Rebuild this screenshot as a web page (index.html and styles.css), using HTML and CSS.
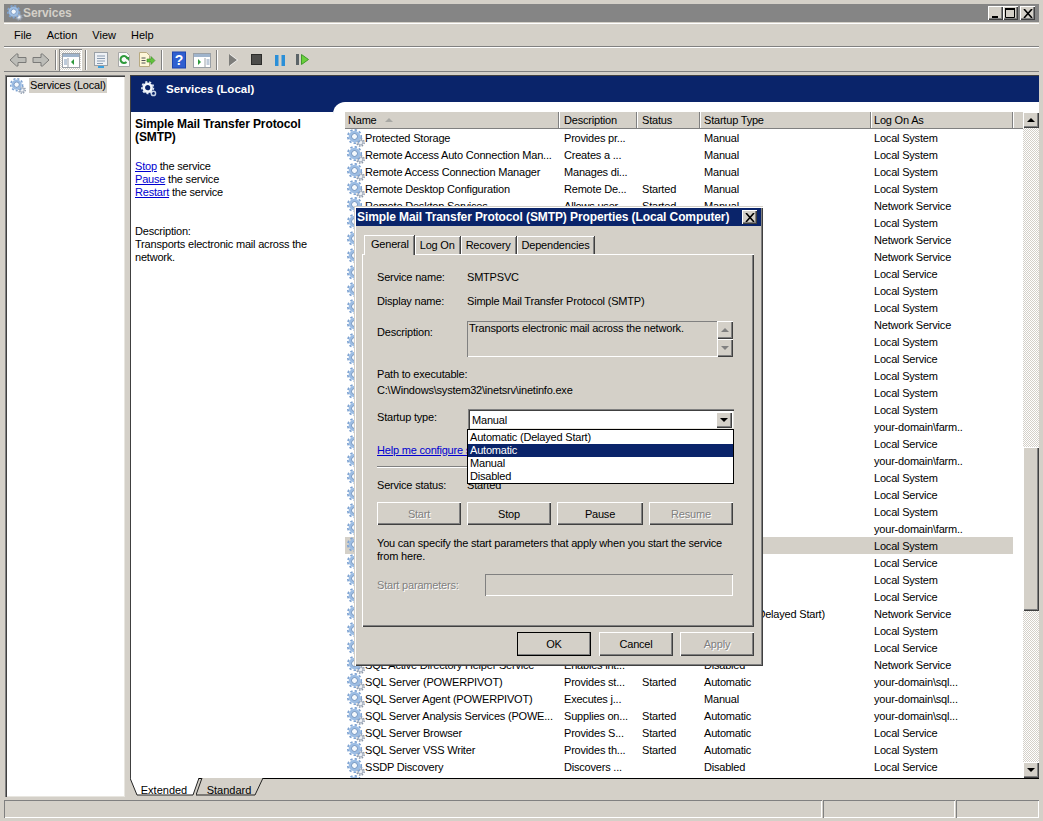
FILE: index.html
```html
<!DOCTYPE html>
<html lang="en">
<head>
    <meta charset="UTF-8">
    <title>Services</title>
    <link rel="stylesheet" href="styles.css">
</head>
<body>
    <svg class="defs" width="0" height="0">
        <symbol id="gear" viewBox="0 0 18 18">
            <circle cx="13.5" cy="13.5" r="3.6" fill="none" stroke="#8d99aa" stroke-width="1.6" stroke-dasharray="1.5 1.3"/>
            <circle cx="13.5" cy="13.5" r="2.4" fill="#eef1f5" stroke="#a9b3c2" stroke-width="1.2"/>
            <circle cx="7.5" cy="7.5" r="6.7" fill="none" stroke="#7ea3d2" stroke-width="1.7" stroke-dasharray="2.4 2.1"/>
            <circle cx="7.5" cy="7.5" r="4.5" fill="#f4f8fc" stroke="#9cbde4" stroke-width="2.6"/>
            <circle cx="7.5" cy="7.5" r="3" fill="none" stroke="#4f78ae" stroke-width=".8"/>
        </symbol>
        <symbol id="gear-light" viewBox="0 0 18 18">
            <circle cx="14" cy="14" r="2.4" fill="none" stroke="#c7d3e6" stroke-width="1.6"/>
            <circle cx="7.5" cy="7.5" r="6.5" fill="none" stroke="#dfe8f4" stroke-width="1.8" stroke-dasharray="2.4 2.1"/>
            <circle cx="7.5" cy="7.5" r="4.4" fill="none" stroke="#f2f6fb" stroke-width="3"/>
        </symbol>
    </svg>

    <div class="window">
        <div class="titlebar">
            <svg class="ico16"><use href="#gear"/></svg>
            <span class="title-text">Services</span>
            <div class="caption-btns">
                <button class="caption-btn"><svg width="9" height="9"><rect x="1" y="7" width="6" height="2" fill="#000"/></svg></button>
                <button class="caption-btn"><svg width="11" height="10"><path d="M.5 1.5h9v8h-9z" fill="none" stroke="#000"/><path d="M0 1h10" stroke="#000" stroke-width="2"/></svg></button>
                <button class="caption-btn close-gap"><svg width="10" height="9"><path d="M1 0l8 9M9 0L1 9" stroke="#000" stroke-width="1.6"/></svg></button>
            </div>
        </div>

        <div class="menubar">
            <span>File</span>
            <span>Action</span>
            <span>View</span>
            <span>Help</span>
        </div>

        <div class="toolbar">
            <span class="tool"><svg width="18" height="16"><path d="M1 8l6.500-6h1.500v3.500h8v5H9V14H7.500z" fill="#bdbdb8" stroke="#7a7a78"/></svg></span>
            <span class="tool"><svg width="18" height="16"><path d="M17 8l-6.500-6H9v3.500H1v5h8V14h1.500z" fill="#bdbdb8" stroke="#7a7a78"/></svg></span>
            <span class="tool-sep"></span>
            <span class="tool tool-on"><svg width="18" height="16"><rect x=".5" y="1.500" width="17" height="14" fill="#fff" stroke="#9aa0a6"/><rect x="1" y="2" width="16" height="3" fill="#9fb4cc"/><path d="M6 6v9" stroke="#9aa0a6"/><path d="M12 7v6l-3-3z" fill="#2f9a3c"/><path d="M2 8h3M2 10h3M2 12h3" stroke="#7f97b5"/></svg></span>
            <span class="tool-sep"></span>
            <span class="tool"><svg width="16" height="18"><rect x="1.500" y="1.500" width="13" height="13" fill="#eef1f5" stroke="#9aa0a6"/><path d="M4 5h8M4 7.500h8M4 10h8M4 12.500h6" stroke="#8a9bb0"/><path d="M5 16h6" stroke="#3aa0e0" stroke-width="2"/></svg></span>
            <span class="tool"><svg width="16" height="18"><path d="M2.500 1.500h8l3 3v11h-11z" fill="#fafafa" stroke="#a8a8a8"/><path d="M11.500 8a3.500 3.500 0 1 0-1 3" fill="none" stroke="#2f9a3c" stroke-width="2"/><path d="M9 6h4v4z" fill="#2f9a3c"/></svg></span>
            <span class="tool"><svg width="18" height="18"><path d="M1.500 1.500h7l3 3v11h-10z" fill="#fdf6d8" stroke="#b8aa80"/><path d="M3.500 7h4M3.500 9.500h4M3.500 12h4" stroke="#555"/><path d="M9 8h4V5.500l4 4-4 4V11H9z" fill="#62c23c" stroke="#3a8a26" stroke-width=".6"/></svg></span>
            <span class="tool-sep wide"></span>
            <span class="tool"><svg width="14" height="18"><rect width="14" height="17" y=".5" fill="#1d45b0"/><rect x="1" y="1.500" width="12" height="15" fill="#2f5fd0"/><text x="7" y="14" class="help-q">?</text></svg></span>
            <span class="tool"><svg width="18" height="16"><rect x=".5" y="1.500" width="17" height="14" fill="#fff" stroke="#9aa0a6"/><rect x="1" y="2" width="16" height="3" fill="#9fb4cc"/><path d="M12 6v9" stroke="#9aa0a6"/><path d="M5 7v6l3-3z" fill="#2f9a3c"/><path d="M13.500 8h3M13.500 10h3M13.500 12h3" stroke="#7f97b5"/></svg></span>
            <span class="tool-sep wide"></span>
            <span class="tool"><svg width="11" height="14"><path d="M2 1l8 6-8 6z" fill="#fff"/><path d="M1 1l8 6-8 6z" fill="#7d7d7a"/></svg></span>
            <span class="tool"><svg width="11" height="11"><rect x=".5" y=".5" width="10" height="10" fill="#4c4c4a" stroke="#2c2c2a"/></svg></span>
            <span class="tool"><svg width="10" height="12"><path d="M0 1h3.500v11H0zM6.500 1H10v11H6.500z" fill="#2a8fd8"/></svg></span>
            <span class="tool"><svg width="13" height="13"><rect y="1" width="3" height="11" fill="#5c6468"/><path d="M5.500 1.500l7 5-7 5z" fill="#6ad03c" stroke="#3f9a2a"/></svg></span>
        </div>

        <div class="workspace">
            <div class="tree">
                <div class="tree-item">
                    <svg class="ico16"><use href="#gear"/></svg>
                    <span class="tree-label">Services (Local)</span>
                </div>
            </div>

            <div class="pane">
                <div class="pane-frame">
                    <div class="pane-head">
                        <svg class="ico16"><use href="#gear-light"/></svg>
                        <span>Services (Local)</span>
                    </div>
                    <div class="pane-body">
                        <div class="details">
                            <h2>Simple Mail Transfer Protocol (SMTP)</h2>
                            <p><a href="#">Stop</a> the service<br><a href="#">Pause</a> the service<br><a href="#">Restart</a> the service</p>
                            <p class="desc">Description:<br>Transports electronic mail across the network.</p>
                        </div>
                        <div class="list-back">
                            <div class="list">
                                <div class="list-main">
                                    <div class="row head">
                                        <span class="c1 sorted">Name</span>
                                        <span class="c2">Description</span>
                                        <span class="c3">Status</span>
                                        <span class="c4">Startup Type</span>
                                        <span class="c5">Log On As</span>
                                    </div>
                                    <div class="rows">
                                        <div class="row"><svg class="ico"><use href="#gear"/></svg><span class="c1">Protected Storage</span><span class="c2">Provides pr...</span><span class="c3"></span><span class="c4">Manual</span><span class="c5">Local System</span></div>
                                        <div class="row"><svg class="ico"><use href="#gear"/></svg><span class="c1">Remote Access Auto Connection Man...</span><span class="c2">Creates a ...</span><span class="c3"></span><span class="c4">Manual</span><span class="c5">Local System</span></div>
                                        <div class="row"><svg class="ico"><use href="#gear"/></svg><span class="c1">Remote Access Connection Manager</span><span class="c2">Manages di...</span><span class="c3"></span><span class="c4">Manual</span><span class="c5">Local System</span></div>
                                        <div class="row"><svg class="ico"><use href="#gear"/></svg><span class="c1">Remote Desktop Configuration</span><span class="c2">Remote De...</span><span class="c3">Started</span><span class="c4">Manual</span><span class="c5">Local System</span></div>
                                        <div class="row"><svg class="ico"><use href="#gear"/></svg><span class="c1">Remote Desktop Services</span><span class="c2">Allows user...</span><span class="c3">Started</span><span class="c4">Manual</span><span class="c5">Network Service</span></div>
                                        <div class="row"><svg class="ico"><use href="#gear"/></svg><span class="c5 push">Local System</span></div>
                                        <div class="row"><svg class="ico"><use href="#gear"/></svg><span class="c5 push">Network Service</span></div>
                                        <div class="row"><svg class="ico"><use href="#gear"/></svg><span class="c5 push">Network Service</span></div>
                                        <div class="row"><svg class="ico"><use href="#gear"/></svg><span class="c5 push">Local Service</span></div>
                                        <div class="row"><svg class="ico"><use href="#gear"/></svg><span class="c5 push">Local System</span></div>
                                        <div class="row"><svg class="ico"><use href="#gear"/></svg><span class="c5 push">Local System</span></div>
                                        <div class="row"><svg class="ico"><use href="#gear"/></svg><span class="c5 push">Network Service</span></div>
                                        <div class="row"><svg class="ico"><use href="#gear"/></svg><span class="c5 push">Local System</span></div>
                                        <div class="row"><svg class="ico"><use href="#gear"/></svg><span class="c5 push">Local Service</span></div>
                                        <div class="row"><svg class="ico"><use href="#gear"/></svg><span class="c5 push">Local System</span></div>
                                        <div class="row"><svg class="ico"><use href="#gear"/></svg><span class="c5 push">Local System</span></div>
                                        <div class="row"><svg class="ico"><use href="#gear"/></svg><span class="c5 push">Local System</span></div>
                                        <div class="row"><svg class="ico"><use href="#gear"/></svg><span class="c5 push">your-domain\farm..</span></div>
                                        <div class="row"><svg class="ico"><use href="#gear"/></svg><span class="c5 push">Local Service</span></div>
                                        <div class="row"><svg class="ico"><use href="#gear"/></svg><span class="c5 push">your-domain\farm..</span></div>
                                        <div class="row"><svg class="ico"><use href="#gear"/></svg><span class="c5 push">Local System</span></div>
                                        <div class="row"><svg class="ico"><use href="#gear"/></svg><span class="c5 push">Local Service</span></div>
                                        <div class="row"><svg class="ico"><use href="#gear"/></svg><span class="c5 push">Local System</span></div>
                                        <div class="row"><svg class="ico"><use href="#gear"/></svg><span class="c5 push">your-domain\farm..</span></div>
                                        <div class="row selected"><svg class="ico"><use href="#gear"/></svg><span class="c5 push">Local System</span></div>
                                        <div class="row"><svg class="ico"><use href="#gear"/></svg><span class="c5 push">Local Service</span></div>
                                        <div class="row"><svg class="ico"><use href="#gear"/></svg><span class="c5 push">Local System</span></div>
                                        <div class="row"><svg class="ico"><use href="#gear"/></svg><span class="c5 push">Local Service</span></div>
                                        <div class="row"><svg class="ico"><use href="#gear"/></svg><span class="c4 push4">Automatic (Delayed Start)</span><span class="c5">Network Service</span></div>
                                        <div class="row"><svg class="ico"><use href="#gear"/></svg><span class="c5 push">Local System</span></div>
                                        <div class="row"><svg class="ico"><use href="#gear"/></svg><span class="c5 push">Local Service</span></div>
                                        <div class="row"><svg class="ico"><use href="#gear"/></svg><span class="c1">SQL Active Directory Helper Service</span><span class="c2">Enables int...</span><span class="c3"></span><span class="c4">Disabled</span><span class="c5">Network Service</span></div>
                                        <div class="row"><svg class="ico"><use href="#gear"/></svg><span class="c1">SQL Server (POWERPIVOT)</span><span class="c2">Provides st...</span><span class="c3">Started</span><span class="c4">Automatic</span><span class="c5">your-domain\sql...</span></div>
                                        <div class="row"><svg class="ico"><use href="#gear"/></svg><span class="c1">SQL Server Agent (POWERPIVOT)</span><span class="c2">Executes j...</span><span class="c3"></span><span class="c4">Manual</span><span class="c5">your-domain\sql...</span></div>
                                        <div class="row"><svg class="ico"><use href="#gear"/></svg><span class="c1">SQL Server Analysis Services (POWE...</span><span class="c2">Supplies on...</span><span class="c3">Started</span><span class="c4">Automatic</span><span class="c5">your-domain\sql...</span></div>
                                        <div class="row"><svg class="ico"><use href="#gear"/></svg><span class="c1">SQL Server Browser</span><span class="c2">Provides S...</span><span class="c3">Started</span><span class="c4">Automatic</span><span class="c5">Local Service</span></div>
                                        <div class="row"><svg class="ico"><use href="#gear"/></svg><span class="c1">SQL Server VSS Writer</span><span class="c2">Provides th...</span><span class="c3">Started</span><span class="c4">Automatic</span><span class="c5">Local System</span></div>
                                        <div class="row"><svg class="ico"><use href="#gear"/></svg><span class="c1">SSDP Discovery</span><span class="c2">Discovers ...</span><span class="c3"></span><span class="c4">Disabled</span><span class="c5">Local Service</span></div>
                                        <div class="row"><svg class="ico"><use href="#gear"/></svg></div>
                                    </div>
                                </div>
                                <div class="scrollbar">
                                    <button class="sb-btn"><i class="arrow up"></i></button>
                                    <div class="sb-track">
                                        <div class="sb-thumb"></div>
                                    </div>
                                    <button class="sb-btn"><i class="arrow down"></i></button>
                                </div>
                            </div>
                        </div>
                    </div>
                </div>
                <div class="view-tabs">
                    <div class="view-tab active">
                        <svg width="69" height="18"><path d="M0 0l7 17h56l6-17z" fill="#fff"/><path d="M0 0l7 17h56l6-17" fill="none" stroke="#222"/></svg>
                        <span>Extended</span>
                    </div>
                    <div class="view-tab">
                        <svg width="68" height="18"><path d="M6 0L0 17h59l8-17" fill="#d4d0c8"/><path d="M6 0L0 17h59l8-17" fill="none" stroke="#222"/></svg>
                        <span>Standard</span>
                    </div>
                </div>
            </div>
        </div>

        <div class="statusbar">
            <div class="status-cell grow"></div>
            <div class="status-cell mid"></div>
            <div class="status-cell end"></div>
        </div>
    </div>

    <div class="dialog">
        <div class="dialog-title">
            <span>Simple Mail Transfer Protocol (SMTP) Properties (Local Computer)</span>
            <button class="caption-btn"><svg width="10" height="9"><path d="M1 0l8 9M9 0L1 9" stroke="#000" stroke-width="1.6"/></svg></button>
        </div>
        <div class="tabs">
            <div class="tab current">General</div>
            <div class="tab">Log On</div>
            <div class="tab">Recovery</div>
            <div class="tab">Dependencies</div>
        </div>
        <div class="tab-panel">
            <div class="field f-name"><label>Service name:</label><span>SMTPSVC</span></div>
            <div class="field f-display"><label>Display name:</label><span>Simple Mail Transfer Protocol (SMTP)</span></div>
            <div class="field f-desc">
                <label>Description:</label>
                <div class="desc-box">
                    <span>Transports electronic mail across the network.</span>
                    <div class="desc-scroll">
                        <button class="sb-btn off"><i class="arrow up"></i></button>
                        <button class="sb-btn off"><i class="arrow down"></i></button>
                    </div>
                </div>
            </div>
            <div class="path">Path to executable:<br>C:\Windows\system32\inetsrv\inetinfo.exe</div>
            <div class="field f-startup">
                <label>Startup type:</label>
                <div class="combo">
                    <div class="combo-value">Manual<button class="sb-btn"><i class="arrow down"></i></button></div>
                    <ul class="combo-list">
                        <li>Automatic (Delayed Start)</li>
                        <li class="hot">Automatic</li>
                        <li>Manual</li>
                        <li>Disabled</li>
                    </ul>
                </div>
            </div>
            <a class="help-link" href="#">Help me configure service startup options.</a>
            <div class="rule"></div>
            <div class="field f-status"><label>Service status:</label><span>Started</span></div>
            <div class="svc-btns">
                <button class="btn off">Start</button>
                <button class="btn">Stop</button>
                <button class="btn">Pause</button>
                <button class="btn off">Resume</button>
            </div>
            <p class="hint">You can specify the start parameters that apply when you start the service from here.</p>
            <div class="field f-params"><label class="muted">Start parameters:</label><div class="param-input"></div></div>
        </div>
        <div class="dialog-btns">
            <button class="btn default">OK</button>
            <button class="btn">Cancel</button>
            <button class="btn off">Apply</button>
        </div>
    </div>
</body>
</html>
```
FILE: styles.css
```css
html, body {
    margin: 0;
    height: 100%;
    overflow: hidden;
}

body {
    background: #d4d0c8;
    color: #000;
    font-family: "Liberation Sans", Arial, sans-serif;
    font-size: 11px;
    letter-spacing: -0.2px;
    position: relative;
}

.defs {
    position: absolute;
}

button {
    font: inherit;
    letter-spacing: inherit;
    color: inherit;
    padding: 0;
    border: 0;
}

a {
    color: #0000d0;
}

.ico16 {
    width: 16px;
    height: 16px;
    flex: none;
}

.window {
    padding: 4px 4px 3px;
    height: 821px;
    box-sizing: border-box;
    display: flex;
    flex-direction: column;
}

/* title bar */
.titlebar {
    height: 18px;
    background: #858585;
    color: #d4d0c8;
    font-weight: bold;
    font-size: 12px;
    letter-spacing: -0.1px;
    display: flex;
    align-items: center;
    padding: 0 3px;
}

.caption-btns {
    margin-left: auto;
    display: flex;
    padding-right: 1px;
}

.caption-btn {
    width: 15px;
    height: 14px;
    background: #d4d0c8;
    box-shadow: inset 1px 1px #fff, inset -1px -1px #404040, inset -2px -2px #808080;
    display: flex;
    align-items: center;
    justify-content: center;
}

.close-gap {
    margin-left: 2px;
}

/* menu and toolbar */
.menubar {
    height: 22px;
    margin-top: 1px;
    border-top: 1px solid #fff;
    border-bottom: 1px solid #808080;
    display: flex;
    align-items: center;
    padding-left: 10px;
    gap: 15px;
    letter-spacing: 0;
}

.toolbar {
    height: 23px;
    border-top: 1px solid #fff;
    border-bottom: 1px solid #808080;
    display: flex;
    align-items: center;
    padding-left: 2px;
}

.tool {
    width: 23px;
    height: 22px;
    display: flex;
    align-items: center;
    justify-content: center;
    flex: none;
}

.tool-on {
    background: repeating-conic-gradient(#d4d0c8 0 25%, #fff 0 50%) 0 0 / 2px 2px;
    box-shadow: inset 1px 1px #808080, inset -1px -1px #fff;
}

.tool-sep {
    width: 7px;
    height: 20px;
    flex: none;
    background: linear-gradient(#808080, #808080) 3px 0 / 1px 100% no-repeat,
                linear-gradient(#fff, #fff) 4px 0 / 1px 100% no-repeat;
}

.tool-sep.wide {
    width: 9px;
}

.help-q {
    fill: #fff;
    font-size: 14px;
    font-weight: bold;
    text-anchor: middle;
}

/* main area */
.workspace {
    flex: 1;
    display: flex;
    min-height: 0;
    padding-top: 3px;
    gap: 5px;
}

.tree {
    width: 120px;
    flex: none;
    background: #fff;
    box-shadow: inset 1px 1px #808080, inset 2px 2px #404040, inset -1px -1px #e8e6e0;
    padding: 3px 0 0 5px;
    box-sizing: border-box;
    margin-left: 1px;
}

.tree-item {
    display: flex;
    align-items: center;
    gap: 3px;
    height: 15px;
}

.tree-label {
    background: #d4d0c8;
    padding: 0 1px;
    height: 15px;
    line-height: 15px;
}

.pane {
    flex: 1;
    min-width: 0;
    display: flex;
    flex-direction: column;
}

.pane-frame {
    flex: 1;
    min-height: 0;
    background: #fff;
    border-left: 1px solid #404040;
    border-top: 1px solid #404040;
    display: flex;
    flex-direction: column;
}

.pane-head {
    height: 26px;
    background: #0a246a;
    color: #fff;
    font-weight: bold;
    font-size: 11.5px;
    letter-spacing: 0;
    display: flex;
    align-items: center;
    padding-left: 10px;
    gap: 9px;
    flex: none;
}

.pane-body {
    flex: 1;
    min-height: 0;
    display: flex;
}

.details {
    width: 202px;
    flex: none;
    border-top: 10px solid #0a246a;
    padding: 6px 5px 0 4px;
    box-sizing: border-box;
    line-height: 13px;
}

.details h2 {
    font-size: 12px;
    letter-spacing: -0.1px;
    margin: 0 0 16px;
    line-height: 13px;
}

.details p {
    margin: 0 0 26px;
}

.list-back {
    flex: 1;
    min-width: 0;
    background: #0a246a;
}

.list {
    height: 100%;
    background: #fff;
    border-top-left-radius: 12px;
    padding: 10px 0 0 12px;
    box-sizing: border-box;
    display: flex;
}

.list-main {
    flex: 1;
    min-width: 0;
    overflow: hidden;
}

.row {
    display: flex;
    align-items: center;
    height: 17px;
    width: 668px;
    white-space: nowrap;
}

.row .ico {
    width: 18px;
    height: 18px;
    flex: none;
    margin-left: 2px;
}

.row span {
    flex: none;
    overflow: hidden;
    box-sizing: border-box;
    padding-left: 5px;
}

.row .c1 { width: 194px; padding-left: 0; }
.row .c2 { width: 78px; }
.row .c3 { width: 63px; }
.row .c4 { width: 171px; padding-left: 4px; }
.row .c5 { width: 142px; padding-left: 3px; }
.row .push { margin-left: 506px; }
.row .push4 { margin-left: 335px; }

.row.selected {
    background: #d4d0c8;
}

.row.head {
    width: 678px;
    height: 17px;
    background: #d4d0c8;
    border-bottom: 1px solid #808080;
    box-sizing: border-box;
}

.row.head span {
    height: 16px;
    line-height: 17px;
    border-right: 1px solid #808080;
    box-shadow: 1px 0 #fff;
}

.row.head .c1 {
    width: 214px;
    padding-left: 3px;
    position: relative;
}

.row.head .sorted::after {
    content: "";
    position: absolute;
    left: 40px;
    top: 6px;
    border: 4px solid transparent;
    border-top: 0;
    border-bottom: 4px solid #a8a8a4;
}

.rows {
    height: 650px;
    overflow: hidden;
}

/* scroll bars */
.scrollbar {
    width: 16px;
    flex: none;
    display: flex;
    flex-direction: column;
}

.sb-btn {
    width: 16px;
    height: 16px;
    flex: none;
    background: #d4d0c8;
    box-shadow: inset 1px 1px #fff, inset -1px -1px #404040, inset -2px -2px #808080;
    display: flex;
    align-items: center;
    justify-content: center;
}

.arrow {
    width: 0;
    height: 0;
    border: 4px solid transparent;
}

.arrow.up {
    border-top: 0;
    border-bottom-color: #000;
}

.arrow.down {
    border-bottom: 0;
    border-top-color: #000;
}

.off .arrow.up {
    border-bottom-color: #808080;
}

.off .arrow.down {
    border-top-color: #808080;
}

.sb-track {
    flex: 1;
    background: repeating-conic-gradient(#d4d0c8 0 25%, #fff 0 50%) 0 0 / 2px 2px;
    padding-top: 319px;
}

.sb-thumb {
    height: 164px;
    background: #d4d0c8;
    box-shadow: inset 1px 1px #fff, inset -1px -1px #404040, inset -2px -2px #808080;
}

/* Extended / Standard tabs */
.view-tabs {
    height: 18px;
    flex: none;
    border-top: 1px solid #000;
    display: flex;
    letter-spacing: 0;
}

.view-tab {
    position: relative;
    width: 66px;
    height: 18px;
    box-sizing: border-box;
    padding-top: 3px;
    display: flex;
    align-items: center;
    justify-content: center;
}

.view-tab.active {
    padding-left: 2px;
}

.view-tab svg {
    position: absolute;
    left: 0;
    top: -1px;
}

.view-tab span {
    position: relative;
}

.statusbar {
    height: 18px;
    flex: none;
    display: flex;
    margin-top: 3px;
    gap: 1px;
}

.status-cell {
    box-shadow: inset 1px 1px #808080, inset -1px -1px #fff;
}

.status-cell.grow { flex: 1; }
.status-cell.mid { width: 132px; }
.status-cell.end { width: 83px; }

/* properties dialog */
.dialog {
    position: absolute;
    left: 354px;
    top: 206px;
    width: 409px;
    height: 460px;
    box-sizing: border-box;
    background: #d4d0c8;
    box-shadow: inset 1px 1px #d4d0c8, inset 2px 2px #fff, inset -1px -1px #404040, inset -2px -2px #808080;
    padding: 2px 2px 3px;
    display: flex;
    flex-direction: column;
}

.dialog-title {
    height: 18px;
    flex: none;
    background: #0a246a;
    color: #fff;
    font-weight: bold;
    font-size: 12px;
    letter-spacing: -0.1px;
    display: flex;
    align-items: center;
    justify-content: space-between;
    padding: 0 4px 0 1px;
    white-space: nowrap;
}

.tabs {
    display: flex;
    align-items: flex-end;
    height: 28px;
    padding-left: 8px;
    flex: none;
}

.tab {
    height: 18px;
    line-height: 19px;
    padding: 0 5px;
    background: #d4d0c8;
    box-shadow: inset 1px 1px #fff, inset -1px 0 #808080;
    border-right: 1px solid #404040;
}

.tab.current {
    height: 20px;
    line-height: 18px;
    padding: 0 5px 0 7px;
    position: relative;
    margin-bottom: -1px;
    z-index: 1;
}

.tab-panel {
    height: 373px;
    flex: none;
    margin-left: 6px;
    width: 392px;
    box-sizing: border-box;
    box-shadow: inset 1px 1px #fff, inset -1px -1px #404040, inset -2px -2px #808080;
    padding: 15px 20px 0 15px;
}

.field {
    display: flex;
    align-items: center;
}

.field label {
    width: 90px;
    flex: none;
}

.f-name {
    height: 16px;
}

.f-display {
    height: 16px;
    margin-top: 8px;
}

.f-desc {
    margin-top: 12px;
    height: 36px;
    align-items: flex-start;
}

.f-desc label {
    padding-top: 5px;
}

.desc-box {
    width: 266px;
    height: 36px;
    box-sizing: border-box;
    box-shadow: inset 1px 1px #808080, inset -1px -1px #fff;
    display: flex;
    justify-content: space-between;
    padding: 0 0 0 2px;
    line-height: 14px;
}

.desc-scroll .sb-btn {
    height: 18px;
}

.path {
    margin-top: 9px;
    line-height: 16px;
}

.f-startup {
    margin-top: 11px;
    height: 20px;
    align-items: flex-start;
}

.f-startup label {
    padding-top: 2px;
}

.combo {
    position: relative;
    width: 266px;
    margin-left: 1px;
}

.combo-value {
    height: 20px;
    background: #fff;
    box-sizing: border-box;
    box-shadow: inset 1px 1px #808080, inset 2px 2px #404040, inset -1px -1px #e8e6e0;
    display: flex;
    align-items: center;
    justify-content: space-between;
    padding: 1px 2px 0 4px;
}

.combo-list {
    position: absolute;
    z-index: 2;
    top: 20px;
    left: -1px;
    width: 267px;
    box-sizing: border-box;
    margin: 0;
    padding: 1px 0 0;
    list-style: none;
    background: #fff;
    border: 1px solid #000;
}

.combo-list li {
    height: 13px;
    line-height: 13px;
    padding-left: 2px;
}

.combo-list .hot {
    background: #0a246a;
    color: #fff;
}

.help-link {
    display: block;
    margin-top: 14px;
    line-height: 14px;
}

.rule {
    height: 1px;
    margin-top: 9px;
    background: #808080;
    box-shadow: 0 1px #fff;
}

.f-status {
    margin-top: 10px;
    height: 16px;
}

.svc-btns {
    display: flex;
    gap: 6px;
    margin-top: 9px;
}

.btn {
    width: 84px;
    height: 23px;
    background: #d4d0c8;
    box-shadow: inset 1px 1px #fff, inset -1px -1px #404040, inset -2px -2px #808080;
}

.svc-btns .btn:nth-child(3) {
    width: 86px;
}

.btn.off {
    color: #808080;
    text-shadow: 1px 1px #fff;
}

.hint {
    margin: 12px 0 0;
    line-height: 13px;
}

.f-params {
    margin-top: 11px;
    height: 22px;
}

.f-params label {
    width: 108px;
}

.muted {
    color: #808080;
    text-shadow: 1px 1px #fff;
}

.param-input {
    width: 248px;
    height: 22px;
    box-sizing: border-box;
    box-shadow: inset 1px 1px #808080, inset -1px -1px #fff;
}

.dialog-btns {
    display: flex;
    justify-content: flex-end;
    gap: 7px;
    padding: 5px 7px 0 0;
}

.dialog-btns .btn {
    width: 74px;
    height: 24px;
}

.btn.default {
    outline: 1px solid #000;
    outline-offset: -1px;
    margin-right: 1px;
}
```
